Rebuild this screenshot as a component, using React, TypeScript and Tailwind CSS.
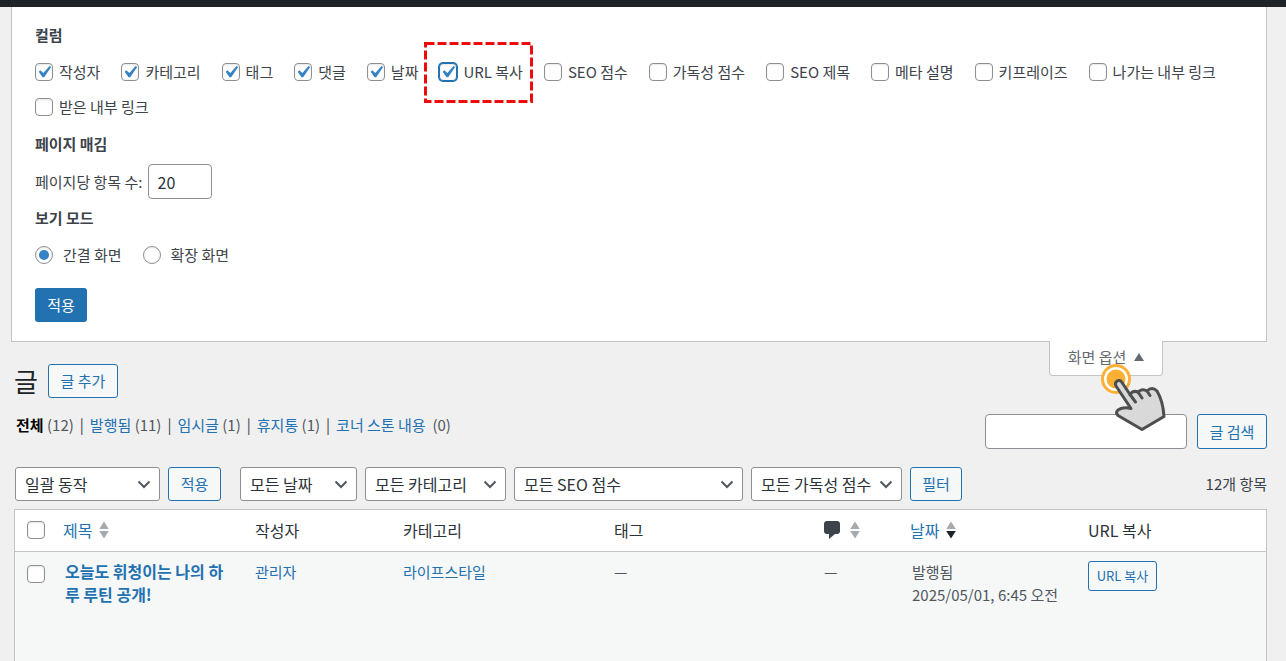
import type { ReactNode } from 'react';

const columns = [
  { id: 'author', label: '작성자', checked: true },
  { id: 'categories', label: '카테고리', checked: true },
  { id: 'tags', label: '태그', checked: true },
  { id: 'comments', label: '댓글', checked: true },
  { id: 'date', label: '날짜', checked: true },
  { id: 'copy-url', label: 'URL 복사', checked: true, highlight: true },
  { id: 'seo-score', label: 'SEO 점수' },
  { id: 'readability', label: '가독성 점수' },
  { id: 'seo-title', label: 'SEO 제목' },
  { id: 'meta-desc', label: '메타 설명' },
  { id: 'keyphrase', label: '키프레이즈' },
  { id: 'outgoing', label: '나가는 내부 링크' },
  { id: 'received', label: '받은 내부 링크' },
];

const statuses = [
  { label: '전체', count: '(12)', current: true },
  { label: '발행됨', count: '(11)' },
  { label: '임시글', count: '(1)' },
  { label: '휴지통', count: '(1)' },
  { label: '코너 스톤 내용', count: ' (0)' },
];

const filters = [
  { id: 'filter-date', label: '모든 날짜', width: 'w-[117px]' },
  { id: 'filter-cat', label: '모든 카테고리', width: 'w-[141px]' },
  { id: 'filter-seo', label: '모든 SEO 점수', width: 'w-[229px]' },
  { id: 'filter-read', label: '모든 가독성 점수', width: 'w-[151px]' },
];

function Checkbox({ id, checked, focused, label }: { id: string; checked?: boolean; focused?: boolean; label?: string }) {
  return (
    <span className="grid h-[18px] w-[18px] shrink-0">
      <input
        type="checkbox"
        id={id}
        aria-label={label}
        defaultChecked={checked}
        className={`peer col-start-1 row-start-1 h-[18px] w-[18px] appearance-none rounded-[4px] border bg-white shadow-[inset_0_1px_2px_rgba(0,0,0,0.1)] ${
          focused ? 'border-[#2271b1] ring-1 ring-[#2271b1]' : 'border-[#8c8f94]'
        }`}
      />
      <svg viewBox="2.7 2.4 15 15" className="pointer-events-none col-start-1 row-start-1 hidden h-[18px] w-[18px] peer-checked:block">
        <path d="M14.83 4.89l1.34.94-5.81 8.38H9.02L5.78 9.67l1.34-1.25 2.57 2.4z" fill="#3582c4" />
      </svg>
    </span>
  );
}

function Radio({ id, label, checked }: { id: string; label: string; checked?: boolean }) {
  return (
    <label htmlFor={id} className="flex items-center gap-[10px]">
      <span className="grid h-[18px] w-[18px] place-items-center">
        <input
          type="radio"
          name="mode"
          id={id}
          defaultChecked={checked}
          className="peer col-start-1 row-start-1 h-[18px] w-[18px] appearance-none rounded-full border border-[#8c8f94] bg-white shadow-[inset_0_1px_2px_rgba(0,0,0,0.1)]"
        />
        <span className="pointer-events-none col-start-1 row-start-1 hidden h-[10px] w-[10px] rounded-full bg-[#3582c4] peer-checked:block" />
      </span>
      {label}
    </label>
  );
}

function Select({ id, label, width }: { id: string; label: string; width: string }) {
  return (
    <span className={`grid h-[34px] items-center ${width}`}>
      <select
        id={id}
        aria-label={label}
        className="col-start-1 row-start-1 h-[34px] w-full appearance-none rounded-[3px] border border-[#8c8f94] bg-white pl-[9px] text-[16px] text-[#2c3338]"
      >
        <option>{label}</option>
      </select>
      <svg viewBox="0 0 14 10" className="pointer-events-none col-start-1 row-start-1 mr-[9px] h-[10px] w-[14px] justify-self-end">
        <path d="M1.5 2.5L7 8l5.5-5.5" fill="none" stroke="#50575e" strokeWidth="2" />
      </svg>
    </span>
  );
}

function Button({ children, className = '' }: { children: ReactNode; className?: string }) {
  return (
    <button
      type="button"
      className={`shrink-0 whitespace-nowrap rounded-[3px] border border-[#2271b1] bg-[#f6f7f7] text-[#2271b1] ${className}`}
    >
      {children}
    </button>
  );
}

function SortArrows({ desc }: { desc?: boolean }) {
  return (
    <svg viewBox="0 0 10 18" className="h-[18px] w-[10px]">
      <path d="M5 .5l4.8 7.5H.2z" fill="#a7aaad" />
      <path d="M5 17.5L.2 10h9.6z" fill={desc ? '#1d2327' : '#a7aaad'} />
    </svg>
  );
}

function PointerHand() {
  return (
    <svg viewBox="0 0 68 72" className="pointer-events-none absolute top-[22px] left-[49px] h-[72px] w-[68px]">
      <circle cx="17" cy="16" r="13.5" fill="#fff" stroke="#fbb034" strokeWidth="3" />
      <circle cx="17" cy="16" r="9.5" fill="#fbb034" />
      <g stroke="#4d4f4e" strokeWidth="3" strokeLinecap="round" strokeLinejoin="round">
        <path
          d="M17 23C15 19 20 15 23 19.5L31 31.5Q34 27 39 29Q43 25 48 28Q53 23 58 28Q64 38 65 53.5L43 66.5L19 52.5Q15 48 22 45.5Q27 44 32 45.5Z"
          fill="#d9d9d9"
        />
        <path d="M31 31.5L36.5 39M39 29L43 35M48 28L51 32.5" fill="none" />
      </g>
    </svg>
  );
}

export default function App() {
  return (
    <div className="flex min-h-screen flex-col bg-[#f0f0f0] font-['Noto_Sans_CJK_KR',sans-serif] text-[15px] leading-[22px] text-[#3c434a]">
      <div className="h-[7px] bg-[#1d2327]" />

      {/* Screen options */}
      <form className="mr-[19px] ml-[11px] border-x border-b border-[#c3c4c7] bg-white px-[23px] pt-[17px] pb-[19px]">
        <h2 className="font-bold">컬럼</h2>
        <div className="mt-2 flex flex-wrap gap-x-[21px]">
          {columns.map((col) => (
            <label key={col.id} htmlFor={col.id} className="relative flex h-[35px] items-center gap-[6px]">
              <Checkbox id={col.id} checked={col.checked} focused={col.highlight} />
              {col.label}
              {col.highlight && (
                <svg viewBox="0 0 109 61" className="pointer-events-none absolute top-[-12px] left-[-15px] h-[61px] w-[109px] max-w-none">
                  <rect x="1.5" y="1.5" width="106" height="58" fill="none" stroke="#ed0c0c" strokeWidth="3" strokeDasharray="9 3" />
                </svg>
              )}
            </label>
          ))}
        </div>

        <h2 className="mt-[9px] font-bold">페이지 매김</h2>
        <div className="mt-[9px] flex items-center gap-[5px]">
          <label htmlFor="per-page">페이지당 항목 수:</label>
          <input
            id="per-page"
            type="text"
            defaultValue="20"
            className="h-[35px] w-16 rounded-[4px] border border-[#8c8f94] bg-white px-[9px] text-[16px] text-[#2c3338]"
          />
        </div>

        <h2 className="mt-2 font-bold">보기 모드</h2>
        <div className="mt-[9px] flex h-[34px] items-center gap-[21px]">
          <Radio id="mode-list" label="간결 화면" checked />
          <Radio id="mode-excerpt" label="확장 화면" />
        </div>

        <button type="button" className="mt-4 block h-[34px] w-[52px] rounded-[3px] bg-[#2271b1] text-white">
          적용
        </button>
      </form>

      <main className="mr-[19px] ml-[14px] flex flex-1 flex-col">
        <div className="flex items-start justify-between">
          <div className="flex items-center gap-[10px] pt-[22px]">
            <h1 className="text-[26px] leading-[34px] text-[#1d2327]">글</h1>
            <Button className="h-[34px] w-[70px]">글 추가</Button>
          </div>
          <button
            type="button"
            className="relative -mt-px mr-[104px] flex h-[35px] w-[114px] items-center justify-center gap-2 rounded-b-[4px] border-x border-b border-[#c3c4c7] bg-white pb-[2px] text-[#646970]"
          >
            화면 옵션
            <svg viewBox="0 0 10 8" className="h-2 w-[10px]">
              <path d="M5 0l5 8H0z" fill="#646970" />
            </svg>
            <PointerHand />
          </button>
        </div>

        <div className="mt-4 flex items-start justify-between">
          <ul className="flex pl-[2px]">
            {statuses.map((status, i) => (
              <li key={status.label} className="whitespace-pre">
                <a href="#" className={status.current ? 'font-bold text-black' : 'text-[#2271b1]'}>
                  {status.label}
                </a>
                <span className="text-[#50575e]"> {status.count}</span>
                {i < statuses.length - 1 && <span className="px-[6px]">|</span>}
              </li>
            ))}
          </ul>
          <div className="flex gap-[10px]">
            <input
              type="search"
              aria-label="글 검색"
              className="h-[35px] w-[202px] rounded-[4px] border border-[#8c8f94] bg-white px-2"
            />
            <Button className="h-[35px] w-[70px]">글 검색</Button>
          </div>
        </div>

        <div className="mt-[18px] flex items-center justify-between pl-px">
          <div className="flex gap-2">
            <Select id="bulk-action" label="일괄 동작" width="w-[145px]" />
            <Button className="mr-[11px] h-[34px] w-[53px]">적용</Button>
            {filters.map((filter) => (
              <Select key={filter.id} {...filter} />
            ))}
            <Button className="h-[34px] w-[52px]">필터</Button>
          </div>
          <span>12개 항목</span>
        </div>

        <div className="mt-2 flex-1 border-x border-t border-[#c3c4c7] bg-[#f6f7f7]">
          <table className="w-full table-fixed border-collapse text-left">
            <colgroup>
              <col className="w-[40px]" />
              <col />
              <col className="w-[148px]" />
              <col className="w-[211px]" />
              <col className="w-[210px]" />
              <col className="w-[86px]" />
              <col className="w-[178px]" />
              <col className="w-[186px]" />
            </colgroup>
            <thead>
              <tr className="h-[41px] border-b border-[#c3c4c7] bg-white text-[16px] text-[#2c3338] *:font-normal">
                <th className="pl-3">
                  <Checkbox id="select-all" label="모두 선택" />
                </th>
                <th className="px-2">
                  <a href="#" className="flex items-center gap-[7px] text-[#2271b1]">
                    제목 <SortArrows />
                  </a>
                </th>
                <th className="px-2">작성자</th>
                <th className="px-2">카테고리</th>
                <th className="px-2">태그</th>
                <th className="px-2">
                  <a href="#" aria-label="댓글" className="flex items-center gap-[10px]">
                    <svg viewBox="0 0 16 18" className="h-[18px] w-4">
                      <path d="M3 0h10q3 0 3 3v7q0 3-3 3h-2l-6 5v-5H3q-3 0-3-3V3q0-3 3-3z" fill="#3c434a" />
                    </svg>
                    <SortArrows />
                  </a>
                </th>
                <th className="px-2">
                  <a href="#" className="flex items-center gap-[7px] text-[#2271b1]">
                    날짜 <SortArrows desc />
                  </a>
                </th>
                <th className="px-2">URL 복사</th>
              </tr>
            </thead>
            <tbody>
              <tr className="align-top leading-[23px] text-[#50575e]">
                <td className="pt-[13px] pl-3">
                  <Checkbox id="select-post" label="글 선택" />
                </td>
                <td className="px-[10px] pt-2 text-[16px] font-bold">
                  <a href="#" className="break-all text-[#2271b1]">오늘도 휘청이는 나의 하루 루틴 공개!</a>
                </td>
                <td className="px-2 pt-2">
                  <a href="#" className="text-[#2271b1]">관리자</a>
                </td>
                <td className="px-2 pt-2">
                  <a href="#" className="text-[#2271b1]">라이프스타일</a>
                </td>
                <td className="px-2 pt-2">—</td>
                <td className="px-2 pt-2">—</td>
                <td className="px-[10px] pt-2">
                  발행됨
                  <br />
                  2025/05/01, 6:45 오전
                </td>
                <td className="px-2 pt-[9px]">
                  <Button className="h-[30px] w-[69px] text-[13px]">URL 복사</Button>
                </td>
              </tr>
            </tbody>
          </table>
        </div>
      </main>
    </div>
  );
}
